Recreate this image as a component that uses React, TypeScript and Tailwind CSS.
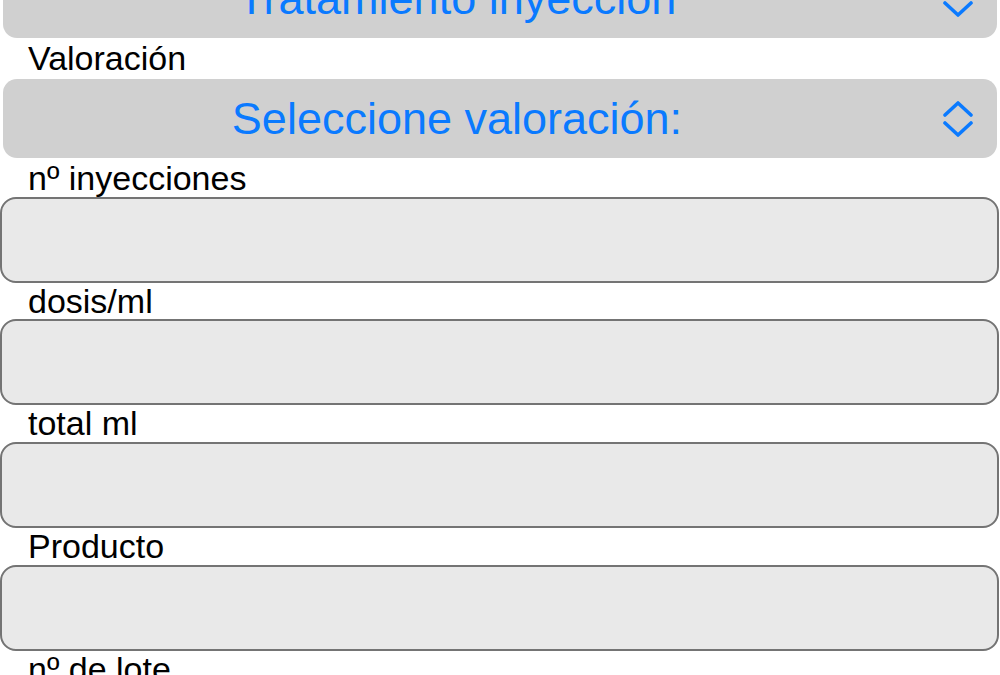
import React from "react";

const font = { fontFamily: '"Liberation Sans", Arial, Helvetica, sans-serif' };

function Chevrons() {
  return (
    <svg width="30" height="36" viewBox="0 0 30 36" fill="none">
      <polyline points="2,14 15,2 28,14" stroke="#0a7aff" strokeWidth="3.6" strokeLinecap="round" strokeLinejoin="round" />
      <polyline points="2,22 15,34 28,22" stroke="#0a7aff" strokeWidth="3.6" strokeLinecap="round" strokeLinejoin="round" />
    </svg>
  );
}

function Select({ text, className = "" }: { text: string; className?: string }) {
  return (
    <div className={`mx-[3px] h-[79px] rounded-[14px] bg-[#d0d0d0] flex items-center ${className}`}>
      <span className="w-[908px] text-center text-[45px] leading-none text-[#0a7aff] whitespace-nowrap">{text}</span>
      <span className="ml-[32px] flex items-center">
        <Chevrons />
      </span>
    </div>
  );
}

function Label({ text, h, pt }: { text: string; h: string; pt: string }) {
  return (
    <div className={`${h} ${pt} pl-[28px] text-[34px] leading-none text-black whitespace-nowrap`}>{text}</div>
  );
}

function Field() {
  return <div className="mr-[1px] h-[86px] rounded-[16px] border-[2.5px] border-[#747474] bg-[#e9e9e9]" />;
}

export default function App() {
  return (
    <div className="w-[1000px] h-[675px] overflow-hidden bg-white" style={font}>
      <Select text="Tratamiento inyección" className="mt-[-41px]" />
      <Label text="Valoración" h="h-[41px]" pt="pt-[3px]" />
      <Select text="Seleccione valoración:" />
      <Label text="nº inyecciones" h="h-[39px]" pt="pt-[3px]" />
      <Field />
      <Label text="dosis/ml" h="h-[36px]" pt="pt-[1px]" />
      <Field />
      <Label text="total ml" h="h-[37px]" pt="pt-[1px]" />
      <Field />
      <Label text="Producto" h="h-[37px]" pt="pt-[1px]" />
      <Field />
      <Label text="nº de lote" h="h-[37px]" pt="pt-[1px]" />
    </div>
  );
}
